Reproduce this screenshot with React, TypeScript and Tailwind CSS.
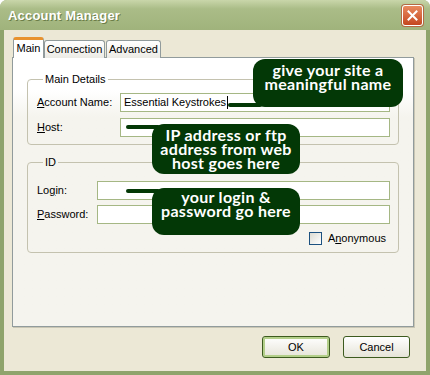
import React from 'react';

const ui = "font-['Liberation_Sans',Arial,sans-serif] text-[11px] leading-[13px] text-black";
const callout = "absolute bg-[#033806] rounded-[12px] text-white text-center font-['Lato','DejaVu_Sans',sans-serif] font-bold text-[16px] tracking-[0.3px] leading-[14px]";

function Pointer({ x, y, w }: { x: string; y: string; w: string }) {
  // thick rounded line from a callout to its field
  return <div className={`absolute ${x} ${y} ${w} h-[4px] rounded-full bg-[#033806]`} />;
}

export default function App() {
  return (
    <div className="relative w-[430px] h-[375px] overflow-hidden bg-white">
      <div className={`w-full h-full flex flex-col rounded-t-[7px] overflow-hidden bg-[#94A971] ${ui}`}>
        {/* Title bar */}
        <div className="h-[30px] shrink-0 flex items-center justify-between pl-[8px] pr-[7px] bg-linear-to-b from-[#C9D6AA] via-[#AABC87] via-[30%] to-[#A0B37C]">
          <span className="font-['Liberation_Sans',Arial,sans-serif] font-bold text-[13px] text-white [text-shadow:1px_1px_0_#6B7D48] tracking-[0.2px]">
            Account Manager
          </span>
          <div className="w-[21px] h-[21px] rounded-[3px] border border-white bg-linear-to-b from-[#E98A5E] to-[#C4461E] flex items-center justify-center shadow-[0_0_0_1px_#B46A45]">
            <svg width="11" height="11" viewBox="0 0 11 11">
              <path d="M1.5 1.5 L9.5 9.5 M9.5 1.5 L1.5 9.5" stroke="white" strokeWidth="2" strokeLinecap="square" />
            </svg>
          </div>
        </div>

        {/* Frame + body */}
        <div className="flex-1 flex flex-col border-x-4 border-b-4 border-[#8FA46C]">
          <div className="flex-1 flex flex-col bg-[#ECE8D6] pl-[8px] pt-[7px]">
            {/* Tabs */}
            <div className="flex items-end h-[21px] -mb-[1px] relative z-10">
              <div className="ml-[1px] w-[31px] h-[21px] bg-white border-x border-[#919B9C] rounded-t-[3px] border-t-[3px] border-t-[#E8922E] flex items-center justify-center pb-[1px]">
                Main
              </div>
              <div className="w-[61px] h-[18px] bg-linear-to-b from-white to-[#ECEBE5] border border-b-0 border-[#919B9C] rounded-t-[3px] flex items-center justify-center">
                Connection
              </div>
              <div className="ml-[1px] w-[55px] h-[18px] bg-linear-to-b from-white to-[#ECEBE5] border border-b-0 border-[#919B9C] rounded-t-[3px] flex items-center justify-center">
                Advanced
              </div>
            </div>

            {/* Tab panel */}
            <div className="w-[402px] h-[270px] border border-[#919B9C] shadow-[1px_1px_0_0_#C9C6B4] bg-linear-to-b from-white from-[12%] to-[#F5F4EE] to-[22%] px-[14px] pt-[15px]">
              <fieldset className="border border-[#C4C2AF] rounded-[4px] pl-[9px] pr-[8px] pt-[7px] pb-[7px]">
                <legend className="ml-[6px] px-[2px] leading-[13px]">Main Details</legend>
                <div className="flex flex-col gap-[6px]">
                  <div className="flex items-center h-[19px]">
                    <span className="w-[83px]"><u>A</u>ccount Name:</span>
                    <div className="w-[270px] h-[19px] border border-[#A5B784] bg-white flex items-center pl-[3px]">
                      Essential Keystrokes
                      <span className="ml-[1px] w-[1px] h-[13px] bg-black" />
                    </div>
                  </div>
                  <div className="flex items-center h-[19px]">
                    <span className="w-[83px]"><u>H</u>ost:</span>
                    <div className="w-[270px] h-[19px] border border-[#A5B784] bg-white" />
                  </div>
                </div>
              </fieldset>

              <fieldset className="mt-[11px] border border-[#C4C2AF] rounded-[4px] pl-[9px] pr-[8px] pt-[12px] pb-[7px]">
                <legend className="ml-[6px] px-[2px] leading-[13px]">ID</legend>
                <div className="flex flex-col gap-[5px]">
                  <div className="flex items-center h-[19px]">
                    <span className="w-[60px]">Lo<u>g</u>in:</span>
                    <div className="w-[293px] h-[19px] border border-[#A5B784] bg-white" />
                  </div>
                  <div className="flex items-center h-[19px]">
                    <span className="w-[60px]"><u>P</u>assword:</span>
                    <div className="w-[293px] h-[19px] border border-[#A5B784] bg-white" />
                  </div>
                </div>
                <div className="mt-[8px] h-[13px] flex items-center justify-end pr-[4px] gap-[6px]">
                  <div className="w-[13px] h-[13px] border border-[#1C5180] bg-linear-to-br from-[#DCDBD2] to-white" />
                  <span>A<u>n</u>onymous</span>
                </div>
              </fieldset>
            </div>

            {/* Buttons */}
            <div className="mt-[9px] flex justify-end gap-[13px] pr-[16px]">
              <button className="w-[68px] h-[22px] rounded-[3px] border border-[#3D5B1F] bg-linear-to-b from-white to-[#E6E4D8] shadow-[inset_0_0_0_2px_#B3CF8A]">
                OK
              </button>
              <button className="w-[67px] h-[22px] rounded-[3px] border border-[#3D5B1F] bg-linear-to-b from-white to-[#E6E4D8]">
                Cancel
              </button>
            </div>
          </div>
        </div>
      </div>

      {/* Annotation callouts */}
      <Pointer x="left-[228px]" y="top-[103px]" w="w-[34px]" />
      <div className={`${callout} left-[253px] top-[59px] w-[150px] h-[48px] pt-[4px]`}>
        give your site a<br />meaningful name
      </div>

      <Pointer x="left-[126px]" y="top-[125px]" w="w-[34px]" />
      <div className={`${callout} left-[152px] top-[124px] w-[148px] h-[50px] pt-[4px]`}>
        IP address or ftp<br />address from web<br />host goes here
      </div>

      <Pointer x="left-[126px]" y="top-[189px]" w="w-[34px]" />
      <div className={`${callout} left-[152px] top-[188px] w-[148px] h-[47px] pt-[2px]`}>
        your login &amp;<br />password go here
      </div>
    </div>
  );
}
